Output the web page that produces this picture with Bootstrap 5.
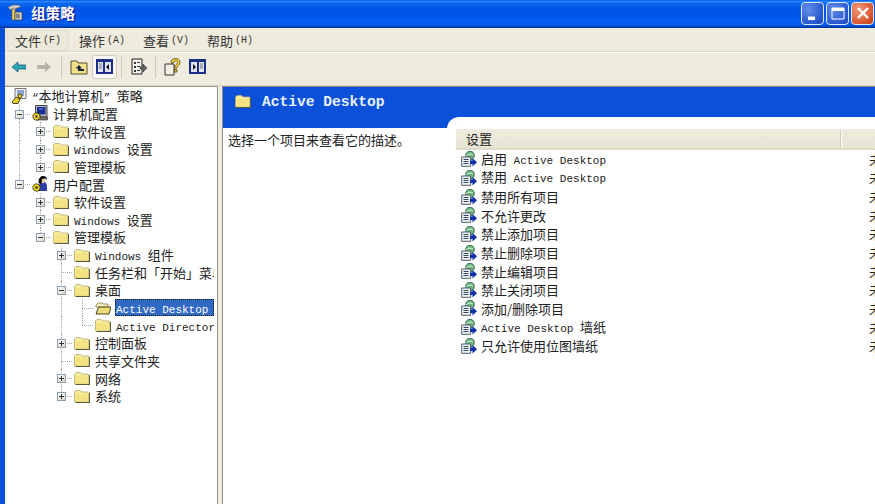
<!DOCTYPE html>
<html lang="zh-CN">
<head>
    <meta charset="UTF-8">
    <meta name="viewport" content="width=device-width, initial-scale=1.0">
    <title>组策略</title>
    <link href="https://cdn.jsdelivr.net/npm/bootstrap@5.3.0/dist/css/bootstrap.min.css" rel="stylesheet">
    <style>
        html, body { height: 100%; overflow: hidden; }
        body {
            background: #0a50d8;
            font-family: "Noto Sans CJK SC", "Liberation Sans", sans-serif;
            font-size: 13px;
            line-height: 1;
            color: #222;
        }
        .lat { font-family: "Liberation Mono", monospace; font-size: 11px; }
        .xp-window { height: 504px; width: 875px; }
        .xp-inner { flex: 1; min-height: 0; padding-left: 5px; }

        /* title bar */
        .xp-title {
            height: 28px;
            flex: none;
            padding: 0 1px 2px 7px;
            background: linear-gradient(#0058ee 0, #2a86f8 5%, #0a68f0 12%, #0256e6 30%, #0055eb 60%, #0560f5 78%, #0058e6 90%, #0042b0 96%, #003092 100%);
            color: #fff;
            font-weight: 700;
            font-size: 14.6px;
            text-shadow: 1px 1px 1px #0f1089;
        }
        .xp-wbtn {
            width: 23px;
            height: 23px;
            margin-left: 2px;
            border: 1px solid #dfe8fb;
            border-radius: 4px;
            background: radial-gradient(circle at 30% 30%, #5f8de8, #2a58cf 70%, #1f46b4);
        }
        .xp-wbtn.xp-close { background: radial-gradient(circle at 30% 30%, #ee9a78, #d8552c 70%, #c33b14); }

        /* menu + toolbar */
        .xp-menu { height: 25px; flex: none; padding: 2px 0 0 2px; background: #efebde; border-bottom: 1px solid #fbf9f1; box-shadow: inset 0 -1px 0 #dcd8c8; }
        .xp-menu-item { width: 64px; height: 21px; padding-left: 8px; font-size: 13px; color: #333; }
        .xp-menu-item .lat { font-size: 10px; margin-left: 2px; }
        .xp-menu-item.xp-on { width: 62px; margin-right: 2px; background: #ece8da; border: 1px solid #e2dece; border-radius: 2px; padding-left: 7px; }
        .xp-tools { height: 33px; flex: none; padding: 0 0 5px 7px; background: #efebde; border-bottom: 1px solid #d8d4c4; }
        .xp-sep { width: 1px; height: 22px; background: #cfcbbb; }
        .xp-sep-a { margin: 0 8px 0 10px; }
        .xp-sep-b { margin: 0 9px 0 4px; }
        .xp-sep-c { margin: 0 8px; }
        .xp-fwd { margin-left: 11px; }
        .xp-toggle { width: 25px; height: 24px; margin-left: 4px; background: #f8f7f2; border: 1px solid #cfcdc2; border-radius: 3px; }
        .xp-ext { margin-left: 7px; }

        /* panes */
        .xp-main { flex: 1; min-height: 0; background: #efebde; }
        .xp-tree { width: 213px; flex: none; padding: 0 3px 0 4px; background: #fff; border: 1px solid #9c9a8e; border-left: 0; border-bottom: 0; white-space: nowrap; }
        .xp-splitter { width: 4px; flex: none; background: #efebde; }
        .xp-right { flex: 1; min-width: 0; background: #fff; border: 1px solid #8e8c80; border-right: 0; border-bottom: 0; }

        /* tree */
        .xp-node { height: 17.65px; overflow: hidden; }
        .xp-cell { width: 21px; height: 100%; flex: none; position: relative; }
        .xp-cell::before, .xp-cell::after { content: ""; position: absolute; }
        .ln-v::before { left: 10px; top: 0; bottom: 0; border-left: 1px dotted #a8a8a8; }
        .ln-l::before { left: 10px; top: 0; height: 9px; border-left: 1px dotted #a8a8a8; }
        .ln-t::before { left: 10px; top: 0; bottom: 0; border-left: 1px dotted #a8a8a8; }
        .ln-l::after, .ln-t::after { left: 10px; right: 0; top: 9px; border-top: 1px dotted #a8a8a8; }
        .xp-box {
            position: absolute;
            z-index: 1;
            left: 6px;
            top: 5px;
            width: 9px;
            height: 9px;
            border: 1px solid #8d9eb0;
            background: linear-gradient(135deg, #fff, #d8d4c8);
        }
        .xp-box::before { content: ""; position: absolute; left: 1px; top: 3px; width: 5px; height: 1px; background: #333; }
        .xp-box.xp-plus::after { content: ""; position: absolute; left: 3px; top: 1px; width: 1px; height: 5px; background: #333; }
        .xp-ico { width: 16px; height: 16px; flex: none; margin-left: 2px; }
        .xp-label { margin-left: 4px; padding: 0 1px; height: 17px; line-height: 17px; }
        .xp-label.xp-sel { width: 99px; background: #316ac5; color: #fff; outline: 1px dotted #111; outline-offset: -1px; }

        /* right pane */
        .xp-banner { height: 41px; flex: none; padding: 2px 0 0 12px; background: #0a50d8; }
        .xp-banner-title { margin: 6px 0 0 11px; color: #e8f0ff; font-family: "Liberation Mono", monospace; font-weight: 700; font-size: 14.6px; }
        .xp-desc { width: 224px; flex: none; padding: 5px 0 0 5px; font-size: 13px; }
        .xp-list { flex: 1; min-width: 0; margin-top: -11px; padding: 12px 0 0 9px; background: #fff; border-top-left-radius: 12px; white-space: nowrap; }
        .xp-head { height: 21px; background: linear-gradient(#efecdf, #e8e5d5); border-bottom: 2px solid #dedbca; padding-left: 10px; font-size: 13px; }
        .xp-head-div { width: 2px; height: 17px; margin-left: auto; margin-right: 33px; background: #fbfaf4; border-left: 1px solid #cfccbb; }
        .xp-row { height: 18.65px; padding-left: 5px; }
        .xp-row .xp-ico { margin-left: 0; }
        .xp-row-name { width: 388px; flex: none; margin-left: 4px; }
    </style>
</head>
<body>
    <!-- ícones -->
    <svg width="0" height="0" class="d-block">
        <defs>
            <symbol id="i-folder" viewBox="0 0 16 16">
                <path d="M.5 4 2 2.500h4.500L8 4h6.500l.5.5V14H.5z" fill="#f7ec9c" stroke="#b3aa70" stroke-width=".8"/>
                <path d="M1.500 6h13v7.500h-13z" fill="#f3e382"/>
                <path d="M15.500 5v9.500H1.500" fill="none" stroke="#5c5838" stroke-width="1.200"/>
            </symbol>
            <symbol id="i-folder-open" viewBox="0 0 16 16">
                <path d="M1 5 3 3h4l1 1h5v3H1z" fill="#f8f1c6" stroke="#8a7a3a" stroke-width=".8"/>
                <path d="M1 14 3.500 7H16l-2 7z" fill="#efdc78" stroke="#4a4626" stroke-width="1"/>
            </symbol>
            <symbol id="i-computer" viewBox="0 0 16 16">
                <path d="M3.500.5h11.500v11.500H3.500z" fill="#bdbdb4" stroke="#333" stroke-width=".9"/>
                <path d="M5 2h8.500v7.500H5z" fill="#1b2f9a"/>
                <path d="M7 3.500h4v1H7z" fill="#7f95e0"/>
                <path d="M5 12h10.500v3H5z" fill="#77776e" stroke="#222" stroke-width=".6"/>
                <circle cx="4.500" cy="11.500" r="3.600" fill="#ecd02a" stroke="#2e2b0c" stroke-width="1.100" stroke-dasharray="1.500 .7"/>
                <circle cx="4.500" cy="11.500" r="1.200" fill="#3a360f"/>
            </symbol>
            <symbol id="i-user" viewBox="0 0 16 16">
                <path d="M7 10.500c0-3 1.500-5 4-5s4 2 4 5V15H7z" fill="#2c3fa8"/>
                <circle cx="10.500" cy="4.500" r="2.800" fill="#efc8a4"/>
                <path d="M6.500 7c0-5 2-7 4.500-7S15 1.500 15 4l-1.500-1.500L10 3 9.500 8z" fill="#0c0c0c"/>
                <circle cx="4.500" cy="11.500" r="3.600" fill="#ecd02a" stroke="#2e2b0c" stroke-width="1.100" stroke-dasharray="1.500 .7"/>
                <circle cx="4.500" cy="11.500" r="1.200" fill="#3a360f"/>
            </symbol>
            <symbol id="i-root" viewBox="0 0 16 16">
                <path d="M4 .5h11v10H4z" fill="#f4f4f4" stroke="#555" stroke-width=".8"/>
                <path d="M6 3h7M6 5h7M6 7h7" stroke="#2f4fb0"/>
                <path d="M1 14 5.500 9l3.500 2-2 4.500H2z" fill="#ecd02a" stroke="#2e2b0c" stroke-width=".9"/>
                <circle cx="9" cy="8" r="2" fill="#ecd02a" stroke="#2e2b0c" stroke-width=".8"/>
            </symbol>
            <symbol id="i-policy" viewBox="0 0 16 16">
                <circle cx="9" cy="4.500" r="4.300" fill="#6fb87c" stroke="#245c44" stroke-width=".9"/>
                <path d="M5 5c1.500-2 5-2.500 7-1" fill="none" stroke="#d6f0d8"/>
                <path d="M.7 6h9v9.300h-9z" fill="#f2f3f2" stroke="#3a4c60" stroke-width=".9"/>
                <path d="M2.500 8.500h5M2.500 10.500h5M2.500 12.500h5" stroke="#2c4868"/>
                <path d="M9 9.500h2.500V7l4.500 4.300-4.500 4.200V13H9z" fill="#1030a8"/>
            </symbol>
        </defs>
    </svg>

    <div class="xp-window d-flex flex-column">
        <div class="xp-title d-flex align-items-center">
            <svg width="16" height="18" viewBox="0 0 16 18" class="flex-shrink-0">
                <path d="M1 3 6 1h6l2 2-4 1-1 1H5L3 6z" fill="#c8ccd0" stroke="#555" stroke-width=".6"/>
                <path d="M5 5h3v11H5z" fill="#f0d050" stroke="#665" stroke-width=".6"/>
                <path d="M8 8h7v8H8z" fill="#e8e8e0" stroke="#333" stroke-width=".8"/>
                <path d="M10 9.500v5M12 9.500v5" stroke="#222"/>
            </svg>
            <span class="ms-1 ps-1 me-auto">组策略</span>
            <div class="xp-wbtn d-flex align-items-end justify-content-center pb-1">
                <svg width="12" height="10" viewBox="0 0 12 10"><path d="M1 6.500h7V10H1z" fill="#fff"/></svg>
            </div>
            <div class="xp-wbtn d-flex align-items-center justify-content-center">
                <svg width="14" height="13" viewBox="0 0 14 13"><path d="M1 1h12v11H1z" fill="none" stroke="#fff"/><path d="M1 1h12v3H1z" fill="#fff"/></svg>
            </div>
            <div class="xp-wbtn xp-close d-flex align-items-center justify-content-center">
                <svg width="14" height="14" viewBox="0 0 14 14"><path d="M2 2l10 10M12 2 2 12" stroke="#fff" stroke-width="2.400"/></svg>
            </div>
        </div>

        <div class="xp-inner d-flex flex-column">
            <div class="xp-menu d-flex align-items-start">
                <div class="xp-menu-item xp-on d-flex align-items-center">文件<span class="lat">(F)</span></div>
                <div class="xp-menu-item d-flex align-items-center">操作<span class="lat">(A)</span></div>
                <div class="xp-menu-item d-flex align-items-center">查看<span class="lat">(V)</span></div>
                <div class="xp-menu-item d-flex align-items-center">帮助<span class="lat">(H)</span></div>
            </div>

            <div class="xp-tools d-flex align-items-center">
                <svg width="14" height="12" viewBox="0 0 14 12"><path d="M0 6l6-5v3h8v4H6v3z" fill="#2aa8b4" stroke="#0c4c68" stroke-width=".7"/></svg>
                <svg width="14" height="12" viewBox="0 0 14 12" class="xp-fwd"><path d="M14 6 8 1v3H0v4h8v3z" fill="#b4b2a8"/></svg>
                <div class="xp-sep xp-sep-a"></div>
                <svg width="18" height="17" viewBox="0 0 18 17"><path d="M1 3h6l1 2h9v11H1z" fill="#f0e08a" stroke="#5a5030"/><path d="M9 7 5.500 10.500H8V13h6v-2h-4V10.500h2z" fill="#14233a"/></svg>
                <div class="xp-toggle d-flex align-items-center justify-content-center">
                    <svg width="17" height="15" viewBox="0 0 17 15"><path d="M0 0h17v15H0z" fill="#1c2f88"/><path d="M2 3h5v10H2zM9 3h6v10H9z" fill="#dfe3f2"/><path d="M3 5h3M3 7h3M3 9h3" stroke="#777"/><path d="M13 5v6L10 8z" fill="#111"/></svg>
                </div>
                <div class="xp-sep xp-sep-b"></div>
                <svg width="16" height="17" viewBox="0 0 16 17"><path d="M1 1h10v15H1z" fill="#f4f4f0" stroke="#222"/><path d="M3 4h2v2H3zM3 8h2v2H3zM3 12h2v2H3z" fill="#333"/><path d="M6 4.500h3M6 8.500h3M6 12.500h3" stroke="#333"/><path d="M9 9h3V6l4 4-4 4v-3H9z" fill="#666" stroke="#222" stroke-width=".5"/></svg>
                <div class="xp-sep xp-sep-c"></div>
                <svg width="18" height="18" viewBox="0 0 18 18"><path d="M1 6h9v11H1z" fill="#f2f0e4" stroke="#333"/><path d="M7 5c0-3 2-4.500 4.500-4.500S16 2 16 4.500c0 3-3 3-3 5.500h-2.500c0-3.500 3-3.500 3-5.500 0-1-.7-1.700-1.800-1.700S9.800 3.700 9.800 5z" fill="#f5d632" stroke="#332d10" stroke-width=".7"/><path d="M10.500 11.500H13V14h-2.500z" fill="#f5d632" stroke="#332d10" stroke-width=".7"/></svg>
                <svg width="17" height="15" viewBox="0 0 17 15" class="xp-ext"><path d="M0 0h17v15H0z" fill="#1c2f88"/><path d="M2 3h6v10H2zM10 3h5v10h-5z" fill="#dfe3f2"/><path d="M4 5v6l3-3z" fill="#111"/><path d="M11 5h3M11 7h3M11 9h3" stroke="#777"/></svg>
            </div>

            <div class="xp-main d-flex">
                <div class="xp-tree overflow-hidden" id="tree"></div>
                <div class="xp-splitter"></div>
                <div class="xp-right d-flex flex-column overflow-hidden">
                    <div class="xp-banner d-flex align-items-start">
                        <svg class="xp-ico ms-0 mt-1"><use href="#i-folder"/></svg>
                        <div class="xp-banner-title">Active Desktop</div>
                    </div>
                    <div class="d-flex flex-grow-1">
                        <div class="xp-desc">选择一个项目来查看它的描述。</div>
                        <div class="xp-list">
                            <div class="xp-head d-flex align-items-center">设置<span class="xp-head-div"></span></div>
                            <div id="items"></div>
                        </div>
                    </div>
                </div>
            </div>
        </div>
    </div>

    <script>
        // [linhas-guia, expansor, ícone, texto, selecionado]
        const lat = s => `<span class="lat">${s}</span>`;
        const nodes = [
            [[], '', 'i-root', lat('“') + '本地计算机' + lat('”&nbsp;') + '策略'],
            [['t'], 'm', 'i-computer', '计算机配置'],
            [['v', 't'], 'p', 'i-folder', '软件设置'],
            [['v', 't'], 'p', 'i-folder', lat('Windows&nbsp;') + '设置'],
            [['v', 'l'], 'p', 'i-folder', '管理模板'],
            [['l'], 'm', 'i-user', '用户配置'],
            [['', 't'], 'p', 'i-folder', '软件设置'],
            [['', 't'], 'p', 'i-folder', lat('Windows&nbsp;') + '设置'],
            [['', 'l'], 'm', 'i-folder', '管理模板'],
            [['', '', 't'], 'p', 'i-folder', lat('Windows&nbsp;') + '组件'],
            [['', '', 't'], '', 'i-folder', '任务栏和「开始」菜单'],
            [['', '', 't'], 'm', 'i-folder', '桌面'],
            [['', '', 'v', 't'], '', 'i-folder-open', lat('Active Desktop'), true],
            [['', '', 'v', 'l'], '', 'i-folder', lat('Active Directory')],
            [['', '', 't'], 'p', 'i-folder', '控制面板'],
            [['', '', 't'], '', 'i-folder', '共享文件夹'],
            [['', '', 't'], 'p', 'i-folder', '网络'],
            [['', '', 'l'], 'p', 'i-folder', '系统']
        ];
        document.getElementById('tree').innerHTML = nodes.map(([guides, box, icon, text, sel]) => {
            const cells = guides.map((g, i) => {
                const last = i === guides.length - 1;
                const boxHtml = last && box ? `<span class="xp-box ${box === 'p' ? 'xp-plus' : ''}"></span>` : '';
                return `<span class="xp-cell ${g ? 'ln-' + g : ''}">${boxHtml}</span>`;
            }).join('');
            return `<div class="xp-node d-flex align-items-center">${cells}
                <svg class="xp-ico"><use href="#${icon}"/></svg>
                <span class="xp-label ${sel ? 'xp-sel' : ''}">${text}</span></div>`;
        }).join('');

        const items = [
            '启用' + lat('&nbsp;Active Desktop'), '禁用' + lat('&nbsp;Active Desktop'), '禁用所有项目', '不允许更改',
            '禁止添加项目', '禁止删除项目', '禁止编辑项目', '禁止关闭项目', '添加/删除项目',
            lat('Active Desktop&nbsp;') + '墙纸', '只允许使用位图墙纸'
        ];
        document.getElementById('items').innerHTML = items.map(t => `
            <div class="xp-row d-flex align-items-center">
                <svg class="xp-ico"><use href="#i-policy"/></svg>
                <span class="xp-row-name">${t}</span><span>未配置</span>
            </div>`).join('');
    </script>
    <script src="https://cdn.jsdelivr.net/npm/bootstrap@5.3.0/dist/js/bootstrap.bundle.min.js"></script>
</body>
</html>
